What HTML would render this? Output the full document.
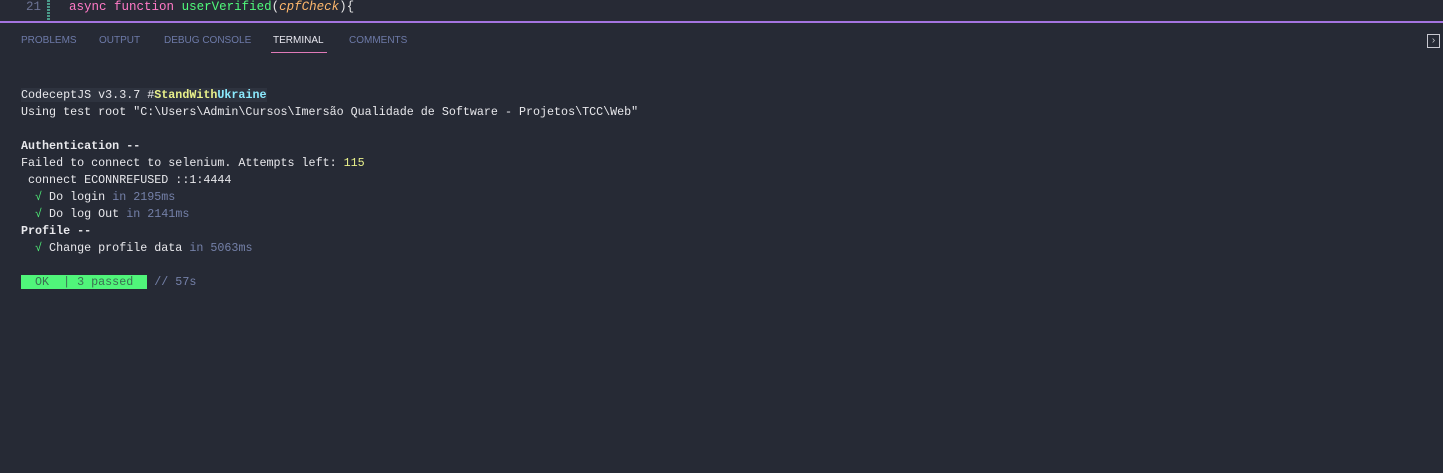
<!DOCTYPE html>
<html><head><meta charset="utf-8"><style>
html,body{margin:0;padding:0;width:1443px;height:473px;overflow:hidden;background:#262a35;}
.editor{position:absolute;left:0;top:0;width:1443px;height:22px;background:#272a35;font-family:"Liberation Mono",monospace;font-size:12.5px;}
.ln{position:absolute;left:26px;top:0px;color:#6c7394;}
.code{position:absolute;left:69px;top:0px;white-space:pre;color:#e6e6e6;}
.gut{position:absolute;left:47px;top:0;width:3px;height:22px;background:repeating-linear-gradient(#4a9a8a 0 2px,#262a35 2px 3px);}
.sep{position:absolute;left:0;top:21px;width:1443px;height:2px;background:#a474e0;}
.tabs{position:absolute;top:35px;left:0;font-family:"Liberation Sans",sans-serif;font-size:10px;color:#6d7aa8;}
.tab{position:absolute;white-space:nowrap;}
.act{color:#e8e8f0;}
.ul{position:absolute;left:271px;top:52px;width:56px;height:1px;background:#e07ab8;}
.term{position:absolute;left:21px;top:87px;font-family:"Liberation Mono",monospace;font-size:11.7px;line-height:17px;color:#e8e8ec;white-space:pre;}
b{font-weight:bold;}
.g{color:#50f57a;}.d{color:#7480a8;}.y{color:#e8f08a;}
.ok{background:#50f57a;color:#3c6e52;}
.btn{position:absolute;left:1427px;top:34px;width:11px;height:12px;border:1px solid #c8c8d0;color:#c8c8d0;font:10px "Liberation Sans",sans-serif;line-height:12px;text-align:center;}
</style></head><body>
<div class="editor"><span class="ln">21</span><div class="gut"></div><span class="code"><span style="color:#ff79c6">async</span> <span style="color:#ff79c6">function</span> <span style="color:#50fa7b">userVerified</span>(<i style="color:#ffb86c">cpfCheck</i>){</span></div>
<div class="sep"></div>
<div class="tabs">
<span class="tab" style="left:21px">PROBLEMS</span>
<span class="tab" style="left:99px">OUTPUT</span>
<span class="tab" style="left:164px">DEBUG CONSOLE</span>
<span class="tab act" style="left:273px">TERMINAL</span>
<span class="tab" style="left:349px">COMMENTS</span>
</div>
<div class="ul"></div>
<div class="btn">›</div>
<div class="term"><span style="background:#2e333f">CodeceptJS v3.3.7 #<b class="y">StandWith</b><b style="color:#8be9fd">Ukraine</b></span>
Using test root "C:\Users\Admin\Cursos\Imersão Qualidade de Software - Projetos\TCC\Web"

<b>Authentication --</b>
Failed to connect to selenium. Attempts left: <span class="y">115</span>
 connect ECONNREFUSED ::1:4444
  <span class="g">√</span> Do login <span class="d">in 2195ms</span>
  <span class="g">√</span> Do log Out <span class="d">in 2141ms</span>
<b>Profile --</b>
  <span class="g">√</span> Change profile data <span class="d">in 5063ms</span>

<span class="ok">  OK  | 3 passed  </span> <span class="d">// 57s</span></div>
</body></html>
